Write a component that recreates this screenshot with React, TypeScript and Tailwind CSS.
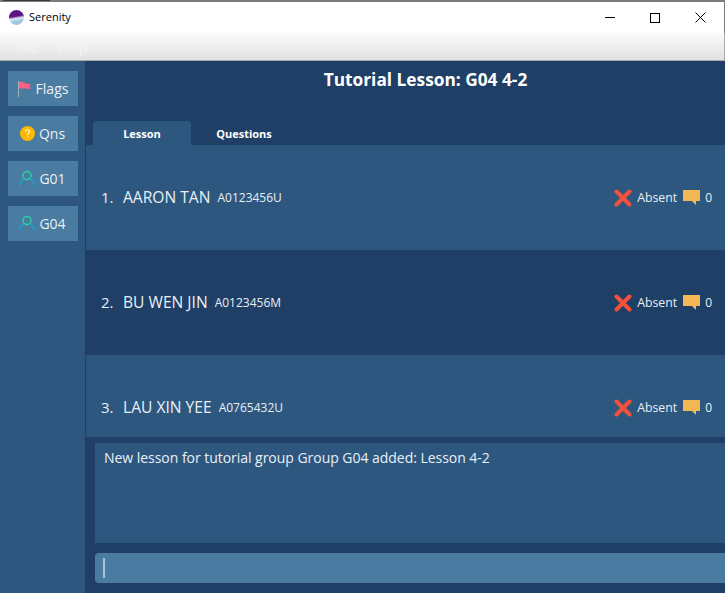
import React from "react";

const FONT = "font-['Open_Sans','Noto_Sans',sans-serif]";

function Person() {
  return (
    <svg width="16" height="15" viewBox="0 0 16 15" fill="none" strokeWidth="1.3">
      <circle cx="8" cy="4.5" r="4" stroke="#2ad9a0" />
      <path d="M0.6 14.5 C1 11 2.8 9 5 8 M15.4 14.5 C15 11 13.2 9 11 8" stroke="#14a8d8" />
    </svg>
  );
}

function Flag() {
  return (
    <svg width="15" height="16" viewBox="0 0 15 16">
      <rect x="1" y="0" width="1" height="16" fill="#9fb0c0" />
      <path d="M2 0.5 L8 1.5 L8 2.5 L14 3 L12.5 5.5 L14 8 L8 7.5 L2 7.5 Z" fill="#f8617f" />
    </svg>
  );
}

function Help() {
  return (
    <svg width="15" height="15" viewBox="0 0 15 15">
      <circle cx="7.5" cy="7.5" r="7.5" fill="#fdb900" />
      <path d="M5.4 5.6 C5.5 3.2 9.6 3.2 9.6 5.6 C9.6 7 7.6 7 7.6 8.8" fill="none" stroke="#fff3c8" strokeWidth="1.3" />
      <rect x="7" y="10.2" width="1.3" height="1.4" fill="#fff3c8" />
    </svg>
  );
}

function Cross() {
  return (
    <svg width="18" height="18" viewBox="0 0 18 18">
      <path d="M2.5 2.5 L15.5 15.5 M15.5 2.5 L2.5 15.5" stroke="#f4503c" strokeWidth="4" strokeLinecap="round" />
    </svg>
  );
}

function Bubble() {
  return (
    <svg width="17" height="15" viewBox="0 0 17 15">
      <path d="M0 0 H17 V11 H13 V15 L9 11 H0 Z" fill="#f3b755" />
    </svg>
  );
}

function SideButton({ icon, label }: { icon: React.ReactNode; label: string }) {
  return (
    <div className="w-[70px] h-[35px] bg-[#4a7ba0] flex items-center justify-center gap-[4px] text-[14px] text-[#e8f0f6]">
      {icon}
      <span>{label}</span>
    </div>
  );
}

function Row({ n, name, id, dark, h }: { n: number; name: string; id: string; dark?: boolean; h: string }) {
  return (
    <div className={`${h} ${dark ? "bg-[#1f3f66]" : "bg-[#2e5780]"} shrink-0 pl-[15px] pr-[13px]`}>
      <div className="h-[105px] flex items-center text-[#e8f0f6]">
        <span className="text-[15px] w-[22px]">{n}.</span>
        <span className="text-[15.6px]">{name}</span>
        <span className="text-[12px] ml-[7px]">{id}</span>
        <div className="ml-auto flex items-center">
          <span className="flex ml-[1px]"><Cross /></span>
          <span className="text-[12.3px] ml-[5px] pt-[2px]">Absent</span>
          <span className="ml-[6px] flex"><Bubble /></span>
          <span className="text-[12px] ml-[5px]">0</span>
        </div>
      </div>
    </div>
  );
}

export default function App() {
  return (
    <div className={`w-[725px] h-[593px] overflow-hidden flex flex-col bg-[#1f3f66] ${FONT}`}>
      <div className="h-[2px] shrink-0 bg-[#7c7c7c]">
        <div className="h-px w-[47px] ml-[3px] bg-[#3c3c3c]" />
      </div>
      <div className="h-[31px] shrink-0 bg-white border-r border-[#7c7c7c] flex items-center text-black">
        <span className="ml-[9px] w-[15px] h-[15px] rounded-full bg-[linear-gradient(170deg,#5b1285_0%,#5b1285_42%,#e8e2f0_55%,#8fd0ea_72%,#e6a8d0_100%)]" />
        <span className="ml-[5px] text-[11px]">Serenity</span>
        <div className="ml-auto flex items-center">
          <span className="w-[45px] flex justify-center"><span className="block w-[10px] h-px bg-black" /></span>
          <span className="w-[45px] flex justify-center"><span className="block w-[10px] h-[10px] border border-black" /></span>
          <span className="w-[47px] flex justify-center">
            <svg width="11" height="11" viewBox="0 0 11 11" stroke="#000" strokeWidth="1"><path d="M0.5 0.5 L10.5 10.5 M10.5 0.5 L0.5 10.5" /></svg>
          </span>
        </div>
      </div>
      <div className="h-[28px] shrink-0 bg-[linear-gradient(180deg,#fbfbfb,#e2e2e2)] border-b border-r border-[#a9a9a9] flex items-center pl-[16px] gap-[19px] text-[14px] text-[#f4f4f4]">
        <span>File</span>
        <span>Help</span>
      </div>
      <div className="flex-1 flex min-h-0">
        <div className="w-[85px] shrink-0 bg-[#2e5780] flex flex-col items-center pt-[10px] gap-[10px]">
          <SideButton icon={<Flag />} label="Flags" />
          <SideButton icon={<Help />} label="Qns" />
          <SideButton icon={<Person />} label="G01" />
          <SideButton icon={<Person />} label="G04" />
        </div>
        <div className="flex-1 min-w-0 border-l border-[#1f3f66] flex flex-col">
          <div className="h-[60px] shrink-0 pt-[6px] pl-[40px] text-center text-[17.3px] font-bold text-white">Tutorial Lesson: G04 4-2</div>
          <div className="h-[24px] shrink-0 flex pl-[7px] text-[11px] font-bold text-white">
            <div className="w-[98px] bg-[#2e5780] rounded-t-[4px] pt-[2px] flex items-center justify-center">Lesson</div>
            <div className="w-[106px] pt-[2px] flex items-center justify-center">Questions</div>
          </div>
          <div className="h-[292px] shrink-0 overflow-hidden flex flex-col">
            <Row n={1} name="AARON TAN" id="A0123456U" h="h-[105px]" />
            <Row n={2} name="BU WEN JIN" id="A0123456M" dark h="h-[105px]" />
            <Row n={3} name="LAU XIN YEE" id="A0765432U" h="h-[82px]" />
          </div>
          <div className="pl-[9px] pt-[6px]">
            <div className="h-[100px] bg-[#2e5780] px-[9px] py-[4px] text-[14px] tracking-[-0.035px] text-[#e8f0f6]">
              New lesson for tutorial group Group G04 added: Lesson 4-2
            </div>
            <div className="mt-[10px] h-[30px] bg-[#4a7ba0] rounded-l-[4px] pl-[8px] flex items-center">
              <span className="block w-[2px] h-[20px] bg-[#a9c3d6]" />
            </div>
          </div>
        </div>
      </div>
    </div>
  );
}
